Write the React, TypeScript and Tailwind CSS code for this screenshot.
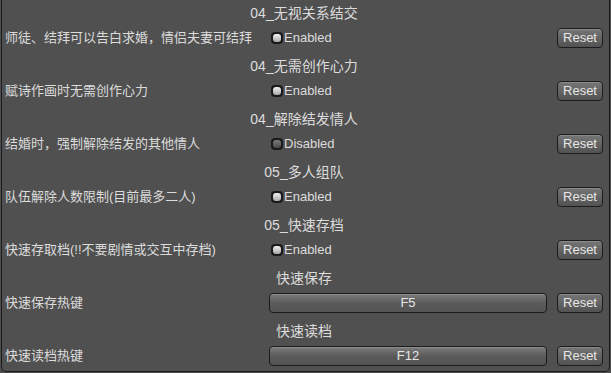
import React from 'react';

type Section = {
  title: string;
  label: string;
  toggle?: boolean;
  keyName?: string;
};

const sections: Section[] = [
  { title: '04_无视关系结交', label: '师徒、结拜可以告白求婚，情侣夫妻可结拜', toggle: true },
  { title: '04_无需创作心力', label: '赋诗作画时无需创作心力', toggle: true },
  { title: '04_解除结发情人', label: '结婚时，强制解除结发的其他情人', toggle: false },
  { title: '05_多人组队', label: '队伍解除人数限制(目前最多二人)', toggle: true },
  { title: '05_快速存档', label: '快速存取档(!!不要剧情或交互中存档)', toggle: true },
  { title: '快速保存', label: '快速保存热键', keyName: 'F5' },
  { title: '快速读档', label: '快速读档热键', keyName: 'F12' },
];

const Toggle = ({ on }: { on: boolean }) => (
  <div className="flex items-center ml-[2px] gap-[1px]">
    <span className="w-[12px] h-[12px] rounded-[4px] bg-[#1a1a1a] p-[2px] flex">
      <span
        className={
          on
            ? 'flex-1 rounded-[3px] bg-linear-to-b from-[#f2f2f2] to-[#a8a8a8]'
            : 'flex-1 rounded-[3px] bg-linear-to-b from-[#7c7c7c] to-[#4a4a4a]'
        }
      />
    </span>
    <span className="text-[13px] text-[#dcdcdc] leading-none">{on ? 'Enabled' : 'Disabled'}</span>
  </div>
);

const ResetButton = () => (
  <button className="ml-[10px] w-[46px] h-[20px] rounded-[4px] border border-[#1c1c1c] bg-linear-to-b from-[#767676] to-[#525252] text-[13px] leading-none text-[#e6e6e6] shadow-[inset_0_1px_0_#8a8a8a]">
    Reset
  </button>
);

const App = () => {
  return (
    <div
      className="w-[611px] h-[373px] bg-[#4e4e4e] overflow-hidden"
      style={{ fontFamily: '"Liberation Sans", "Noto Sans CJK SC", sans-serif' }}
    >
      <div className="ml-[1px] w-[609px] h-[372px] border-x border-b border-[#1c1c1c] rounded-b-[5px] bg-[#505050]">
        {sections.map((s) => (
          <div key={s.title} className="mb-[3px]">
            <div className="h-[25px] flex items-center justify-center pr-[3px] text-[14px] leading-none text-[#dcdcdc]">
              {s.title}
            </div>
            <div className="h-[25px] flex items-center pl-[3px] pr-[6px]">
              <div className="w-[264px] text-[13px] leading-none text-[#dcdcdc] whitespace-nowrap">{s.label}</div>
              <div className="flex-1 flex items-center">
                {s.keyName ? (
                  <div className="w-full h-[20px] rounded-[4px] border border-[#1c1c1c] bg-linear-to-b from-[#7c7c7c] via-[#5a5a5a] to-[#545454] shadow-[inset_0_1px_0_#8c8c8c] flex items-center justify-center text-[13px] leading-none text-[#e6e6e6]">
                    {s.keyName}
                  </div>
                ) : (
                  <Toggle on={!!s.toggle} />
                )}
              </div>
              <ResetButton />
            </div>
          </div>
        ))}
      </div>
    </div>
  );
};

export default App;
